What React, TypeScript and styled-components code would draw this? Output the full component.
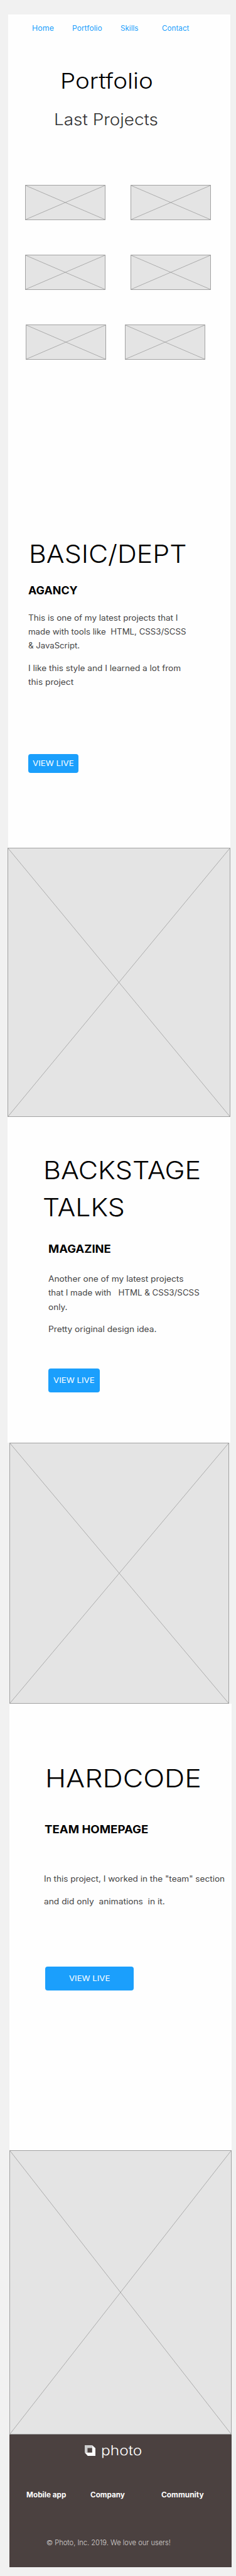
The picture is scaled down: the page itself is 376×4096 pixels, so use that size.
import React from "react";
import styled, { createGlobalStyle, css } from "styled-components";

const GlobalStyle = createGlobalStyle`
  * { box-sizing: border-box; }
  body { margin: 0; background: #f1f1f1; }
`;

const Page = styled.div`
  display: flex;
  flex-direction: column;
  width: 376px;
  height: 4096px;
  padding-top: 23px;
  overflow: hidden;
  background: #f1f1f1;
  font-family: Inter, "Liberation Sans", sans-serif;
`;

const Section = styled.section<{ $left: number; $width: number; $height: number }>`
  display: flex;
  flex-direction: column;
  align-items: flex-start;
  flex: none;
  margin-left: ${(p) => p.$left}px;
  width: ${(p) => p.$width}px;
  height: ${(p) => p.$height}px;
  background: #fefefe;
`;

type LineProps = { $size?: number; $stretch?: number; $x?: number; $top?: number };

/* Wide lettering: each line of text is stretched horizontally from its left edge. */
const wide = css<LineProps>`
  width: max-content;
  margin: ${(p) => p.$top ?? 0}px 0 0 ${(p) => p.$x ?? 0}px;
  white-space: pre;
  transform: scaleX(${(p) => p.$stretch ?? 1});
  transform-origin: 0 50%;
`;

const Nav = styled.nav`
  display: grid;
  grid-template-columns: 64.3px 76.8px 66.5px auto;
  margin: 13.9px 0 0 37.9px;
`;

const NavLink = styled.a<LineProps>`
  ${wide}
  font-size: 11.4px;
  line-height: 16px;
  color: #1b9ffc;
`;

const Title = styled.h1<LineProps & { $line?: number }>`
  ${wide}
  font-size: ${(p) => p.$size ?? 39.85}px;
  font-weight: 300;
  line-height: ${(p) => p.$line ?? 48}px;
  color: #000;
`;

const Subtitle = styled.h2<LineProps>`
  ${wide}
  font-size: 25.6px;
  font-weight: 300;
  line-height: 32px;
  color: #333;
`;

const Kicker = styled.h3<LineProps>`
  ${wide}
  font-size: 17.1px;
  font-weight: 700;
  line-height: 20px;
  color: #000;
`;

const Copy = styled.div<{ $line?: number; $x: number; $top: number }>`
  margin: ${(p) => p.$top}px 0 0 ${(p) => p.$x}px;
  font-size: 12.8px;
  font-weight: 400;
  line-height: ${(p) => p.$line ?? 22.15}px;
  color: #444;
`;

const CopyLine = styled.div<LineProps>`
  ${wide}
`;

const Button = styled.button<{ $x: number; $top: number; $width: number; $height: number; $inset: number }>`
  display: flex;
  align-items: center;
  flex: none;
  margin: ${(p) => p.$top}px 0 0 ${(p) => p.$x}px;
  padding: 0 0 0 ${(p) => p.$inset}px;
  width: ${(p) => p.$width}px;
  height: ${(p) => p.$height}px;
  border: 0;
  border-radius: 4px;
  background: #1b9ffc;
  font-family: inherit;
`;

const ButtonLabel = styled.span<LineProps>`
  ${wide}
  font-size: 11.7px;
  line-height: 16px;
  color: #fff;
`;

const Gallery = styled.div`
  display: flex;
  flex-direction: column;
  gap: 55px;
  margin: 87.7px 0 0 27px;
`;

const GalleryRow = styled.div<{ $indent?: number; $gap: number }>`
  display: flex;
  gap: ${(p) => p.$gap}px;
  padding-left: ${(p) => p.$indent ?? 0}px;
`;

const Frame = styled.div<{ $width: number; $height: number; $left?: number }>`
  flex: none;
  display: flex;
  width: ${(p) => p.$width}px;
  height: ${(p) => p.$height}px;
  margin-left: ${(p) => p.$left ?? 0}px;
  border: 1px solid #a2a2a2;
  background: #e4e4e4;
`;

const Cross = styled.svg`
  width: 100%;
  height: 100%;
  stroke: #acacac;
  stroke-width: 1;
`;

const Footer = styled.footer`
  flex: none;
  display: flex;
  flex-direction: column;
  margin-left: 15px;
  width: 354px;
  height: 211px;
  background: #4b4140;
`;

const Brand = styled.div`
  display: flex;
  align-items: center;
  gap: 9px;
  height: 24px;
  margin: 13px 0 0 120.3px;
`;

const BrandMark = styled.svg`
  width: 17px;
  height: 17px;
`;

const BrandName = styled.span<LineProps>`
  ${wide}
  font-size: 21.2px;
  font-weight: 300;
  line-height: 24px;
  color: #fff;
`;

const FooterLinks = styled.div`
  display: grid;
  grid-template-columns: 102.5px 112.5px auto;
  margin: 51.1px 0 0 26.8px;
`;

const FooterLink = styled.a<LineProps>`
  ${wide}
  font-size: 11.2px;
  font-weight: 700;
  line-height: 16px;
  color: #fff;
`;

const Legal = styled.p<LineProps>`
  ${wide}
  font-size: 11.2px;
  font-weight: 300;
  line-height: 16px;
  color: #d6d3d2;
`;

function Placeholder(props: { width: number; height: number; left?: number }) {
  return (
    <Frame $width={props.width} $height={props.height} $left={props.left}>
      <Cross>
        <line x1="0" y1="0" x2="100%" y2="100%" />
        <line x1="100%" y1="0" x2="0" y2="100%" />
      </Cross>
    </Frame>
  );
}

export default function App() {
  return (
    <>
      <GlobalStyle />
      <Page>
        <Section $left={13} $width={354} $height={1325}>
          <Nav>
            <NavLink $stretch={1.095}>Home</NavLink>
            <NavLink $stretch={1.06}>Portfolio</NavLink>
            <NavLink $stretch={1.02}>Skills</NavLink>
            <NavLink $stretch={1.026}>Contact</NavLink>
          </Nav>
          <Title $size={34.15} $line={40} $stretch={1.128} $x={82.5} $top={56.6}>Portfolio</Title>
          <Subtitle $stretch={1.09} $x={72.8} $top={24.8}>Last Projects</Subtitle>
          <Gallery>
            <GalleryRow $gap={40}>
              <Placeholder width={128} height={56} />
              <Placeholder width={128} height={56} />
            </GalleryRow>
            <GalleryRow $gap={40}>
              <Placeholder width={128} height={56} />
              <Placeholder width={128} height={56} />
            </GalleryRow>
            <GalleryRow $gap={30} $indent={1}>
              <Placeholder width={128} height={56} />
              <Placeholder width={128} height={56} />
            </GalleryRow>
          </Gallery>
          <Title $stretch={1.075} $x={32.6} $top={284.8}>BASIC/DEPT</Title>
          <Kicker $stretch={1.045} $x={32.1} $top={24.5}>AGANCY</Kicker>
          <Copy $x={31.9} $top={22.9}>
            <CopyLine $stretch={1.056}>This is one of my latest projects that I</CopyLine>
            <CopyLine $stretch={1.036}>{"made with tools like  HTML, CSS3/SCSS"}</CopyLine>
            <CopyLine $stretch={1.029}>&amp; JavaScript.</CopyLine>
          </Copy>
          <Copy $x={31.9} $top={13.3}>
            <CopyLine $stretch={1.062}>I like this style and I learned a lot from</CopyLine>
            <CopyLine $stretch={1.071}>this project</CopyLine>
          </Copy>
          <Button $x={32.1} $top={103} $width={79.8} $height={29.7} $inset={7.1}>
            <ButtonLabel $stretch={1.134}>VIEW LIVE</ButtonLabel>
          </Button>
        </Section>

        <Placeholder width={355} height={428} left={12} />

        <Section $left={12} $width={355} $height={518}>
          <Title $line={59} $stretch={1.082} $x={57.2} $top={54.8}>BACKSTAGE</Title>
          <Title $line={59} $stretch={1.073} $x={55.6}>TALKS</Title>
          <Kicker $stretch={1.078} $x={64.8} $top={27.3}>MAGAZINE</Kicker>
          <Copy $x={64.7} $top={27.2}>
            <CopyLine $stretch={1.072}>Another one of my latest projects</CopyLine>
            <CopyLine $stretch={1.04}>{"that I made with   HTML & CSS3/SCSS"}</CopyLine>
            <CopyLine $stretch={1.061}>only.</CopyLine>
          </Copy>
          <Copy $x={64.7} $top={13.2}>
            <CopyLine $stretch={1.07}>Pretty original design idea.</CopyLine>
          </Copy>
          <Button $x={64.8} $top={51.1} $width={82} $height={38.3} $inset={8.4}>
            <ButtonLabel $stretch={1.134}>VIEW LIVE</ButtonLabel>
          </Button>
        </Section>

        <Placeholder width={350} height={415} left={15} />

        <Section $left={15} $width={354} $height={710}>
          <Title $stretch={1.122} $x={57.1} $top={94.6}>HARDCODE</Title>
          <Kicker $stretch={1.09} $x={56.1} $top={47.6}>TEAM HOMEPAGE</Kicker>
          <Copy $line={35.3} $x={54.6} $top={51.3}>
            <CopyLine $stretch={1.061}>In this project, I worked in the "team" section</CopyLine>
            <CopyLine $stretch={1.075}>{"and did only  animations  in it."}</CopyLine>
          </Copy>
          <Button $x={56.7} $top={85.6} $width={141.8} $height={38.4} $inset={38.2}>
            <ButtonLabel $stretch={1.13}>VIEW LIVE</ButtonLabel>
          </Button>
        </Section>

        <Placeholder width={354} height={452} left={15} />

        <Footer>
          <Brand>
            <BrandMark viewBox="0 0 23 23">
              <path d="M0 0H16V6H6V16H0Z" fill="#cdcdcd" />
              <path d="M16 0L23 6.5V23H6.5L0 16H16Z" fill="#fff" />
            </BrandMark>
            <BrandName $stretch={1.157}>photo</BrandName>
          </Brand>
          <FooterLinks>
            <FooterLink $stretch={1.05}>Mobile app</FooterLink>
            <FooterLink $stretch={1.045}>Company</FooterLink>
            <FooterLink $stretch={1.063}>Community</FooterLink>
          </FooterLinks>
          <Legal $stretch={0.992} $x={58.7} $top={60.1}>© Photo, Inc. 2019. We love our users!</Legal>
        </Footer>
      </Page>
    </>
  );
}
